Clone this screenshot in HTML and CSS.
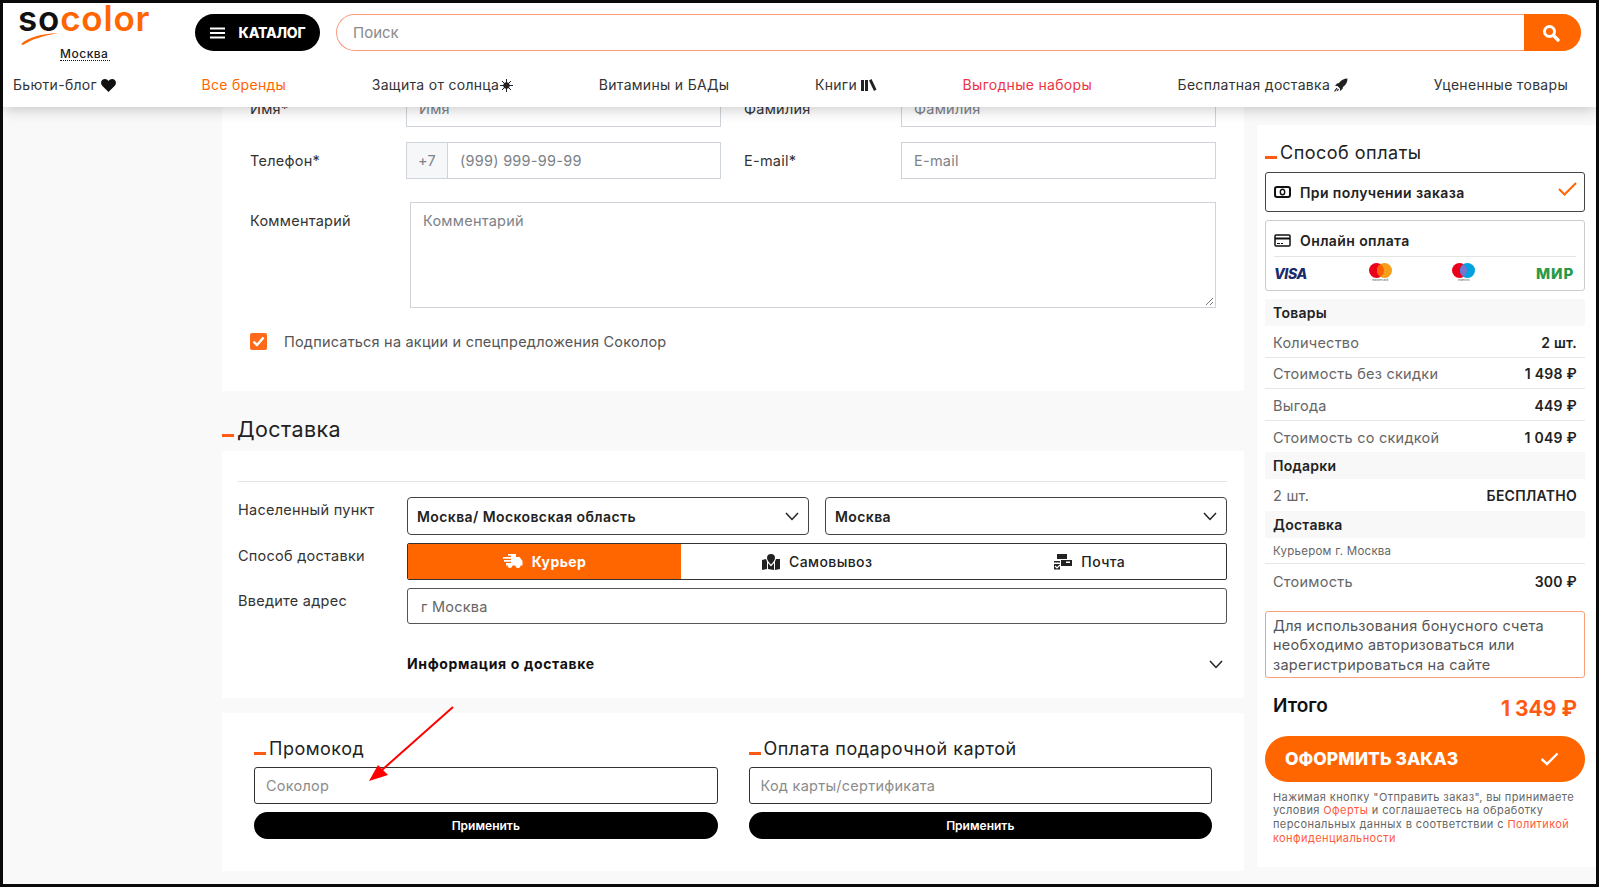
FILE: index.html
```html
<!DOCTYPE html>
<html lang="ru">
<head>
<meta charset="UTF-8">
<meta name="viewport" content="width=device-width, initial-scale=1.0">
<title>Оформление заказа</title>
<link rel="stylesheet" href="styles.css">
</head>
<body>
<div class="frame">
    <header class="header">
        <div class="header-top">
            <div class="logo-block">
                <div class="logo"><span class="logo-so">so</span><span class="logo-color">color</span></div>
                <svg class="logo-swoosh" width="38" height="12" viewBox="0 0 38 12"><path d="M0 11C8 4 20 1 37 0C22 3 11 6 2 12Z" fill="#ff6600"/></svg>
                <div class="city">Москва</div>
            </div>
            <div class="catalog-btn">
                <svg width="15" height="12" viewBox="0 0 15 12"><path d="M0 1.500H15M0 6H15M0 10.500H15" stroke="#fff" stroke-width="2"/></svg>
                <span>КАТАЛОГ</span>
            </div>
            <div class="search">
                <div class="search-text">Поиск</div>
                <div class="search-btn">
                    <svg width="18" height="18" viewBox="0 0 18 18"><circle cx="7.500" cy="7.500" r="5" fill="none" stroke="#fff" stroke-width="3"/><path d="M11.500 11.500L16 16" stroke="#fff" stroke-width="3.400" stroke-linecap="round"/></svg>
                </div>
            </div>
        </div>
        <nav class="nav">
            <a>Бьюти-блог
                <svg width="15" height="13" viewBox="0 0 15 13"><path d="M7.500 13L1.200 6.800C-1.500 3.500 1 0 3.900 0C5.400 0 6.700 .8 7.500 2C8.300 .8 9.600 0 11.100 0C14 0 16.500 3.500 13.800 6.800Z" fill="#111"/></svg>
            </a>
            <a class="nav-orange">Все бренды</a>
            <a>Защита от солнца<svg class="nav-sun" width="13" height="13" viewBox="0 0 13 13"><circle cx="6.500" cy="6.500" r="3.200" fill="#222"/><path d="M6.500 0V13M0 6.500H13M2 2L11 11M11 2L2 11" stroke="#222" stroke-width="1"/></svg></a>
            <a>Витамины и БАДы</a>
            <a>Книги
                <svg width="16" height="12" viewBox="0 0 16 12"><path d="M0 1H3V12H0ZM4 1H7V12H4ZM8 1.500L10.500 0L15.500 10.500L13 12Z" fill="#222"/></svg>
            </a>
            <a class="nav-red">Выгодные наборы</a>
            <a>Бесплатная доставка
                <svg width="14" height="14" viewBox="0 0 14 14"><path d="M13.500 .5C10 .5 7 2 5 5L3 5.500L1 8L3.500 8L6 10.500L6 13L8.500 11L9 9C12 7 13.500 4 13.500 .5Z" fill="#222"/><path d="M3 10L.5 13.500M4.500 11L3 13" stroke="#222" stroke-width="1.200"/></svg>
            </a>
            <a>Уцененные товары</a>
        </nav>
    </header>

    <div class="page">
        <main class="main">
            <section class="card card-contacts">
                <div class="contact-grid">
                    <label>Имя*</label>
                    <div class="input">Имя</div>
                    <label class="label-second">Фамилия</label>
                    <div class="input">Фамилия</div>

                    <label>Телефон*</label>
                    <div class="input phone"><span class="phone-code">+7</span><span class="phone-num">(999) 999-99-99</span></div>
                    <label class="label-second">E-mail*</label>
                    <div class="input">E-mail</div>
                </div>
                <div class="comment-row">
                    <label>Комментарий</label>
                    <div class="textarea">Комментарий
                        <svg class="resize" width="10" height="10" viewBox="0 0 10 10"><path d="M9 2L2 9M9 6L6 9" stroke="#777" stroke-width="1"/></svg>
                    </div>
                </div>
                <div class="subscribe">
                    <span class="checkbox">
                        <svg width="13" height="11" viewBox="0 0 13 11"><path d="M1.500 5.500L5 9L11.500 1.500" fill="none" stroke="#fff" stroke-width="2.400"/></svg>
                    </span>
                    Подписаться на акции и спецпредложения Соколор
                </div>
            </section>

            <h2 class="section-title"><span class="dash"></span>Доставка</h2>

            <section class="card card-delivery">
                <div class="delivery-form">
                    <label>Населенный пункт</label>
                    <div class="select-pair">
                        <div class="select">Москва/ Московская область
                            <svg width="14" height="9" viewBox="0 0 14 9"><path d="M1 1L7 7.500L13 1" fill="none" stroke="#222" stroke-width="1.500"/></svg>
                        </div>
                        <div class="select">Москва
                            <svg width="14" height="9" viewBox="0 0 14 9"><path d="M1 1L7 7.500L13 1" fill="none" stroke="#222" stroke-width="1.500"/></svg>
                        </div>
                    </div>
                    <label>Способ доставки</label>
                    <div class="tabs">
                        <div class="tab tab-active">
                            <svg width="20" height="15" viewBox="0 0 20 15"><path d="M5 0H13V3H16.500L19.500 7V11.500H17.500A2.500 2.500 0 0 1 12.500 11.500H9.500A2.500 2.500 0 0 1 4.500 11.500H3V9H8V7.800H1V6H8V4.800H0V3H8V1.800H5Z" fill="#fff"/></svg>
                            Курьер
                        </div>
                        <div class="tab">
                            <svg width="18" height="16" viewBox="0 0 18 16"><path d="M9 0A4 4 0 0 1 13 4C13 6 10.500 9 9 10.500C7.500 9 5 6 5 4A4 4 0 0 1 9 0ZM0 6L4 5L5 7.500V15L0 16ZM18 5V15L13 16V7.500L14 5ZM6 9L9 12.500L12 9V16L6 15Z" fill="#222"/></svg>
                            Самовывоз
                        </div>
                        <div class="tab">
                            <svg width="18" height="16" viewBox="0 0 18 16"><path d="M3 0H13V5H3ZM7 6H18V12H7ZM0 7H6V8.500H0ZM0 10H6V15.500H0Z" fill="#222"/><path d="M12 7.500H16V9H12Z" fill="#fff"/><path d="M1 12L3 14L6 11" fill="none" stroke="#fff" stroke-width="1.200"/></svg>
                            Почта
                        </div>
                    </div>
                    <label>Введите адрес</label>
                    <div class="address">г Москва</div>
                    <span></span>
                    <div class="delivery-info">Информация о доставке
                        <svg width="14" height="9" viewBox="0 0 14 9"><path d="M1 1L7 7.500L13 1" fill="none" stroke="#222" stroke-width="1.500"/></svg>
                    </div>
                </div>
            </section>

            <section class="card card-promo">
                <div class="promo-col">
                    <h3 class="block-title"><span class="dash"></span>Промокод</h3>
                    <div class="promo-input">Соколор</div>
                    <div class="apply-btn">Применить</div>
                </div>
                <div class="promo-col">
                    <h3 class="block-title"><span class="dash"></span>Оплата подарочной картой</h3>
                    <div class="promo-input">Код карты/сертификата</div>
                    <div class="apply-btn">Применить</div>
                </div>
            </section>
        </main>

        <aside class="aside">
            <h3 class="block-title"><span class="dash"></span>Способ оплаты</h3>
            <div class="pay-option pay-selected">
                <div class="pay-head">
                    <svg width="17" height="12" viewBox="0 0 17 12"><rect x="1" y="1" width="15" height="10" rx="2" fill="none" stroke="#111" stroke-width="2"/><ellipse cx="8.500" cy="6" rx="2.200" ry="2.800" fill="none" stroke="#111" stroke-width="1.400"/></svg>
                    При получении заказа
                    <svg class="pay-check" width="19" height="14" viewBox="0 0 19 14"><path d="M1 7L6.500 12.500L18 1" fill="none" stroke="#ff6600" stroke-width="2"/></svg>
                </div>
            </div>
            <div class="pay-option pay-online">
                <div class="pay-head">
                    <svg width="17" height="13" viewBox="0 0 17 13"><rect x="1" y="1" width="15" height="11" rx="1" fill="none" stroke="#111" stroke-width="1.500"/><path d="M1 4.500H16" stroke="#111" stroke-width="2"/><path d="M3 9.500H6M7 9.500H9" stroke="#111" stroke-width="1"/></svg>
                    Онлайн оплата
                </div>
                <div class="pay-logos">
                    <span class="visa">VISA</span>
                    <span class="card-mark">
                        <svg width="23" height="15" viewBox="0 0 23 15"><circle cx="7.500" cy="7.500" r="7.500" fill="#eb001b"/><circle cx="15.500" cy="7.500" r="7.500" fill="#f79e1b"/><path d="M11.500 1.200A7.500 7.500 0 0 1 11.500 13.800A7.500 7.500 0 0 1 11.500 1.200Z" fill="#ff5f00"/></svg>
                        <small>mastercard</small>
                    </span>
                    <span class="card-mark">
                        <svg width="23" height="15" viewBox="0 0 23 15"><circle cx="7.500" cy="7.500" r="7.500" fill="#eb001b"/><circle cx="15.500" cy="7.500" r="7.500" fill="#00a1df"/><path d="M11.500 1.200A7.500 7.500 0 0 1 11.500 13.800A7.500 7.500 0 0 1 11.500 1.200Z" fill="#7375cf"/></svg>
                        <small>maestro</small>
                    </span>
                    <span class="mir">МИР</span>
                </div>
            </div>

            <div class="summary">
                <div class="sum-band">Товары</div>
                <div class="sum-row"><span>Количество</span><b>2 шт.</b></div>
                <div class="sum-row"><span>Стоимость без скидки</span><b>1 498 ₽</b></div>
                <div class="sum-row"><span>Выгода</span><b>449 ₽</b></div>
                <div class="sum-row sum-last"><span>Стоимость со скидкой</span><b>1 049 ₽</b></div>
                <div class="sum-band">Подарки</div>
                <div class="sum-row sum-last"><span>2 шт.</span><b class="free">БЕСПЛАТНО</b></div>
                <div class="sum-band">Доставка</div>
                <div class="sum-row sum-small"><span>Курьером г. Москва</span></div>
                <div class="sum-row sum-last sum-cost"><span>Стоимость</span><b>300 ₽</b></div>
            </div>

            <div class="bonus-note">Для использования бонусного счета необходимо авторизоваться или зарегистрироваться на сайте</div>

            <div class="total">
                <span class="total-label">Итого</span>
                <span class="total-price">1 349 ₽</span>
            </div>

            <div class="order-btn">ОФОРМИТЬ ЗАКАЗ
                <svg width="19" height="14" viewBox="0 0 19 14"><path d="M1.500 7L7 12L17.500 1.500" fill="none" stroke="#fff" stroke-width="2.400"/></svg>
            </div>

            <p class="legal">Нажимая кнопку "Отправить заказ", вы принимаете<br>условия <a>Оферты</a> и соглашаетесь на обработку<br>персональных данных в соответствии с <a>Политикой</a><br><a>конфиденциальности</a></p>
        </aside>
    </div>

    <!-- red pointer drawn over the promo field -->
    <svg class="pointer" width="100" height="90" viewBox="0 0 100 90">
        <path d="M90 4L19 67" stroke="#f00" stroke-width="2"/>
        <path d="M6 78L15 62L25 72Z" fill="#f00"/>
    </svg>
</div>
</body>
</html>
```

FILE: styles.css
```css
* {
    box-sizing: border-box;
}
body {
    margin: 0;
    background-color: #fff;
    font-family: Inter, "Open Sans", sans-serif;
    color: #333;
}
.frame {
    position: relative;
    width: 1599px;
    height: 887px;
    border: 3px solid #0a0a0a;
    overflow: hidden;
    background-color: #f9f9f9;
}
svg {
    flex-shrink: 0;
}

/* header */
.header {
    position: relative;
    z-index: 2;
    height: 104px;
    background-color: #fff;
    box-shadow: 0 2px 14px rgba(0, 0, 0, 0.22);
}
.header-top {
    display: flex;
    align-items: flex-start;
    height: 70px;
    padding: 11px 15px 0 15px;
}
.logo-block {
    position: relative;
    width: 177px;
    flex-shrink: 0;
}
.logo {
    margin-top: -13px;
    font-size: 35px;
    font-weight: 600;
    line-height: 34px;
    letter-spacing: 0.800px;
}
.logo-so {
    color: #111;
}
.logo-color {
    color: #ff6600;
}
.logo-swoosh {
    position: absolute;
    left: 3px;
    top: 19px;
}
.city {
    width: 50px;
    margin: 12px 0 0 42px;
    border-bottom: 1px dotted #111;
    font-size: 12px;
    font-weight: 500;
    line-height: 13px;
    letter-spacing: 0.5px;
    color: #222;
}
.catalog-btn {
    display: flex;
    align-items: center;
    justify-content: center;
    gap: 14px;
    width: 125px;
    height: 37px;
    margin-right: 16px;
    flex-shrink: 0;
    border-radius: 19px;
    background-color: #000;
    color: #fff;
    font-size: 14px;
    font-weight: 800;
    letter-spacing: -0.2px;
}
.search {
    display: flex;
    flex: 1;
    height: 37px;
    border: 1px solid #fb9a7c;
    border-right: 0;
    border-radius: 19px;
}
.search-text {
    flex: 1;
    padding-left: 16px;
    font-size: 15px;
    line-height: 35px;
    color: #8a8a8a;
}
.search-btn {
    display: flex;
    align-items: center;
    justify-content: center;
    width: 57px;
    margin: -1px 0;
    border-radius: 0 19px 19px 0;
    background-color: #ff6600;
    padding-right: 3px;
}
.nav {
    display: flex;
    justify-content: space-between;
    padding: 0 28px 0 10px;
    font-size: 14px;
    line-height: 24px;
    letter-spacing: 0.3px;
    color: #333;
}
.nav a {
    display: flex;
    align-items: center;
    gap: 4px;
}
.nav .nav-sun {
    margin-left: -3px;
}
.nav-orange {
    color: #ff6600;
}
.nav-red {
    color: #ee3344;
}

/* page columns */
.page {
    display: flex;
    align-items: flex-start;
    padding-left: 219px;
}
.main {
    width: 1022px;
    margin-top: -17px;
}
.aside {
    flex: 1;
    height: 742px;
    margin: 18px 0 0 13px;
    padding: 16px 11px 0 8px;
    background-color: #fff;
}
.card {
    background-color: #fff;
}
.dash {
    display: inline-block;
    width: 12px;
    height: 3px;
    margin-right: 3px;
    background-color: #ff5a14;
}
label {
    font-size: 14.500px;
    letter-spacing: 0.25px;
    color: #333;
}

/* contact fields */
.card-contacts {
    padding: 0 28px 41px;
}
.contact-grid {
    display: grid;
    grid-template-columns: 156px 315px 180px 315px;
    row-gap: 15px;
}
.contact-grid label {
    line-height: 37px;
}
.label-second {
    padding-left: 23px;
}
.input {
    height: 37px;
    padding-left: 12px;
    border: 1px solid #ced4da;
    font-size: 14.500px;
    line-height: 35px;
    letter-spacing: 0.25px;
    color: #7d8288;
}
.phone {
    display: flex;
    padding-left: 0;
}
.phone-code {
    width: 41px;
    border-right: 1px solid #ced4da;
    background-color: #f6f7f8;
    text-align: center;
}
.phone-num {
    padding-left: 12px;
}
.comment-row {
    display: flex;
    margin-top: 23px;
}
.comment-row label {
    width: 160px;
    padding-top: 9px;
    line-height: 20px;
}
.textarea {
    position: relative;
    flex: 1;
    height: 106px;
    padding: 8px 12px;
    border: 1px solid #ced4da;
    font-size: 14.500px;
    line-height: 20px;
    letter-spacing: 0.25px;
    color: #7d8288;
}
.resize {
    position: absolute;
    right: 1px;
    bottom: 1px;
}
.subscribe {
    display: flex;
    align-items: center;
    gap: 17px;
    margin-top: 25px;
    font-size: 14.500px;
    letter-spacing: 0.2px;
    color: #555;
}
.checkbox {
    display: flex;
    align-items: center;
    justify-content: center;
    width: 17px;
    height: 17px;
    border-radius: 2px;
    background-color: #ff6a1a;
}

/* delivery */
.section-title {
    display: flex;
    align-items: center;
    height: 60px;
    margin: 0;
    padding-top: 16px;
    font-size: 21.500px;
    font-weight: 400;
    letter-spacing: 0.4px;
    color: #222;
}
.section-title .dash {
    margin-top: 12px;
}
.card-delivery {
    height: 247px;
    padding: 30px 17px 0 16px;
}
.delivery-form {
    display: grid;
    grid-template-columns: 169px 1fr;
    row-gap: 8px;
    padding-top: 15px;
    border-top: 1px solid #e4e4e4;
}
.delivery-form label {
    padding-top: 1px;
    line-height: 24px;
}
.select-pair {
    display: flex;
    gap: 16px;
}
.select {
    display: flex;
    align-items: center;
    justify-content: space-between;
    flex: 1;
    height: 38px;
    padding: 0 9px;
    border: 1px solid #444;
    border-radius: 4px;
    font-size: 14px;
    font-weight: 600;
    letter-spacing: 0.4px;
    color: #222;
}
.tabs {
    display: grid;
    grid-template-columns: 273px 1fr 1fr;
    height: 37px;
    border: 1px solid #333;
    border-radius: 2px;
    overflow: hidden;
}
.tab {
    display: flex;
    align-items: center;
    justify-content: center;
    gap: 9px;
    font-size: 14px;
    font-weight: 500;
    letter-spacing: 0.4px;
    color: #222;
}
.tab-active {
    background-color: #ff6600;
    color: #fff;
    font-weight: 700;
}
.address {
    height: 36px;
    padding-left: 13px;
    border: 1px solid #555;
    border-radius: 3px;
    font-size: 14.500px;
    line-height: 35px;
    letter-spacing: 0.25px;
    color: #666;
}
.delivery-info {
    display: flex;
    align-items: center;
    justify-content: space-between;
    margin-top: 22px;
    padding-right: 4px;
    font-size: 14px;
    font-weight: 700;
    letter-spacing: 0.650px;
    line-height: 20px;
    color: #111;
}

/* promo */
.card-promo {
    display: grid;
    grid-template-columns: 1fr 1fr;
    column-gap: 31px;
    margin-top: 15px;
    padding: 24px 32px 32px;
}
.block-title {
    display: flex;
    align-items: center;
    margin: 0;
    font-size: 18px;
    font-weight: 400;
    line-height: 24px;
    letter-spacing: 0.5px;
    color: #222;
}
.block-title .dash {
    margin-top: 9px;
}
.promo-input {
    height: 37px;
    margin-top: 6px;
    padding-left: 11px;
    border: 1px solid #333;
    border-radius: 3px;
    font-size: 14.500px;
    line-height: 36px;
    letter-spacing: 0.25px;
    color: #8c8c8c;
}
.apply-btn {
    height: 27px;
    margin-top: 8px;
    border-radius: 14px;
    background-color: #000;
    color: #fff;
    font-size: 12px;
    font-weight: 600;
    line-height: 27px;
    text-align: center;
}

/* payment */
.pay-option {
    margin-top: 8px;
    padding: 0 8px;
    border: 1px solid #ccc;
    border-radius: 3px;
}
.pay-selected {
    height: 40px;
    margin-top: 7px;
    border-color: #444;
}
.pay-online {
    height: 71px;
}
.pay-head {
    display: flex;
    align-items: center;
    gap: 9px;
    height: 38px;
    font-size: 14px;
    font-weight: 600;
    letter-spacing: 0.4px;
    color: #222;
}
.pay-online .pay-head {
    height: 36px;
    padding-top: 3px;
    border-bottom: 1px solid #e4e4e4;
}
.pay-check {
    margin: -6px -1px 0 auto;
}
.pay-logos {
    display: flex;
    align-items: center;
    justify-content: space-between;
    height: 33px;
}
.visa {
    width: 34px;
    font-size: 14px;
    font-weight: 800;
    font-style: italic;
    letter-spacing: -0.4px;
    color: #1a2a6c;
}
.card-mark {
    display: flex;
    flex-direction: column;
    align-items: center;
    width: 23px;
    margin-top: -2px;
}
.card-mark small {
    font-size: 3px;
    line-height: 4px;
    color: #555;
}
.mir {
    width: 40px;
    font-size: 15px;
    font-weight: 800;
    letter-spacing: 1px;
    color: #2a9a48;
}
.summary {
    margin-top: 8px;
    font-size: 14.500px;
    letter-spacing: 0.25px;
}
.sum-band {
    height: 27px;
    padding-left: 8px;
    background-color: #f8f8f8;
    font-size: 14px;
    font-weight: 600;
    line-height: 28px;
    color: #222;
}
.sum-row {
    display: flex;
    justify-content: space-between;
    align-items: center;
    height: 31.500px;
    padding: 2px 8px 0;
    border-bottom: 1px solid #e6e6e6;
    color: #666;
}
.sum-row b {
    font-size: 14px;
    font-weight: 600;
    color: #222;
}
.sum-last {
    border-bottom: 0;
}
.sum-small {
    height: 26px;
    font-size: 11.500px;
}
.sum-cost {
    height: 35px;
    padding-top: 0;
}
.bonus-note {
    height: 67px;
    margin-top: 12px;
    padding: 4px 7px;
    border: 1px solid #fba07c;
    border-radius: 3px;
    font-size: 14.500px;
    line-height: 19.500px;
    letter-spacing: 0.25px;
    color: #555;
}
.total {
    display: flex;
    justify-content: space-between;
    align-items: center;
    height: 58px;
    padding: 0 8px;
}
.total-label {
    margin-top: -2px;
    font-size: 19px;
    font-weight: 600;
    color: #111;
}
.total-price {
    margin-top: 4px;
    font-size: 21px;
    font-weight: 700;
    color: #ff5a14;
}
.order-btn {
    display: flex;
    align-items: center;
    justify-content: space-between;
    height: 46px;
    padding: 0 26px 0 20px;
    border-radius: 23px;
    background-color: #ff6600;
    color: #fff;
    font-size: 17.500px;
    font-weight: 800;
}
.legal {
    margin: 9px 0 0;
    padding: 0 8px;
    font-size: 11px;
    line-height: 13.700px;
    letter-spacing: 0.4px;
    color: #666;
}
.legal a {
    color: #ff5a3c;
}

/* pointer over the promo field */
.pointer {
    position: absolute;
    z-index: 3;
    left: 360px;
    top: 700px;
}
```
